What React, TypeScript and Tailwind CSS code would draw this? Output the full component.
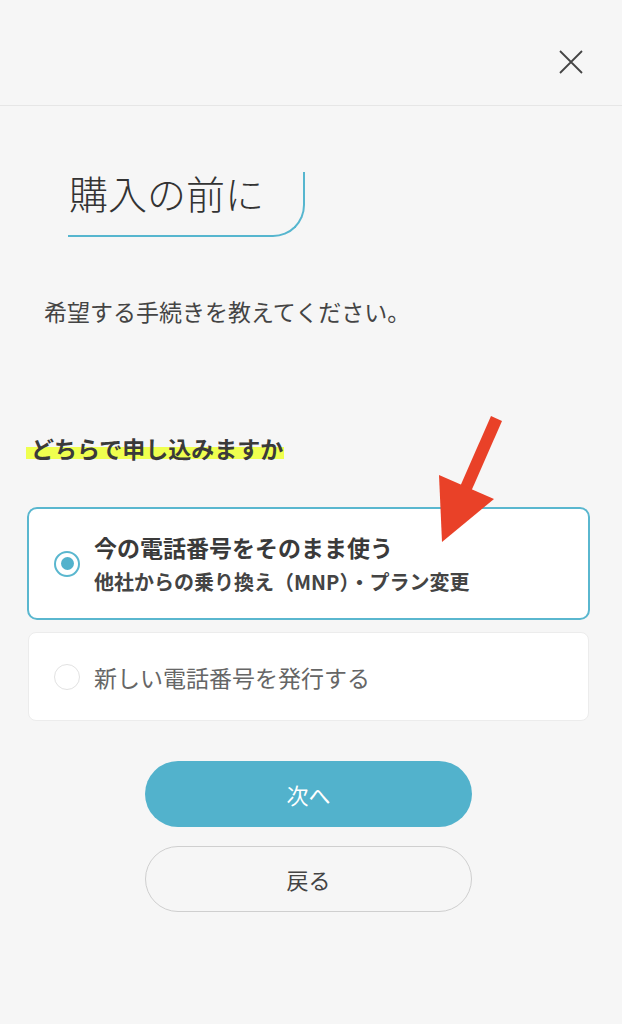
import React from "react"

const font = { fontFamily: '"Noto Sans CJK JP", "Noto Sans", sans-serif' }

const CloseIcon = () => (
  <svg width="24" height="24" viewBox="0 0 24 24" className="block">
    <path d="M1 1 L23 23 M23 1 L1 23" stroke="#444" strokeWidth="1.8" fill="none" />
  </svg>
)

const Arrow = () => (
  <svg
    className="absolute left-[430px] top-[405px] pointer-events-none"
    width="80"
    height="145"
    viewBox="430 405 80 145"
  >
    <line x1="496.5" y1="418.5" x2="466" y2="488" stroke="#e94128" strokeWidth="12" />
    <polygon points="439,475 494,499 442,542" fill="#e94128" />
  </svg>
)

const App: React.FC = () => (
  <div className="relative w-[622px] min-h-[1024px] bg-[#f6f6f6] text-[#333]" style={font}>
    <header className="h-[106px] border-b border-[#e6e6e6] flex justify-end items-start pt-[50px] pr-[39px]">
      <CloseIcon />
    </header>

    <div className="mt-[66px] ml-[68px] w-[237px] h-[65px] border-b-2 border-r-2 border-[#56b6cf] rounded-br-[32px]">
      <h1 className="pl-[1px] pt-[1px] text-[39px] leading-none font-light text-[#333]">購入の前に</h1>
    </div>

    <p className="mt-[63px] ml-[44px] text-[23px] leading-none text-[#444]">希望する手続きを教えてください。</p>

    <div className="mt-[112px] ml-[26px]">
      <span className="inline-block pl-[5px] pr-[1px] text-[23px] leading-[26px] font-bold text-[#3a3a3a] bg-[linear-gradient(transparent_46%,#efff4f_46%,#efff4f_92%,transparent_92%)]">
        どちらで申し込みますか
      </span>
    </div>

    <div className="mt-[44px] ml-[27px] w-[563px] h-[113px] border-2 border-[#5ab7cf] rounded-[10px] bg-white flex items-center">
      <span className="ml-[25px] w-[26px] h-[26px] rounded-full border-2 border-[#5ab7cf] flex items-center justify-center shrink-0">
        <span className="w-[13px] h-[13px] rounded-full bg-[#52b2cc]" />
      </span>
      <div className="ml-[14px] flex flex-col gap-[8px]">
        <span className="text-[23px] leading-[28px] font-bold text-[#3a3a3a]">今の電話番号をそのまま使う</span>
        <span className="text-[20px] leading-[26px] font-bold text-[#444]">他社からの乗り換え（MNP）・プラン変更</span>
      </div>
    </div>

    <div className="mt-[12px] ml-[28px] w-[561px] h-[89px] border border-[#ececec] rounded-[8px] bg-white flex items-center">
      <span className="ml-[25px] w-[26px] h-[26px] rounded-full border-[1.5px] border-[#e2e2e2] shrink-0" />
      <span className="ml-[14px] text-[23px] leading-[28px] text-[#666]">新しい電話番号を発行する</span>
    </div>

    <button className="mt-[40px] ml-[145px] w-[327px] h-[66px] rounded-full bg-[#52b2cc] text-white text-[22px] flex items-center justify-center">
      次へ
    </button>
    <button className="mt-[19px] ml-[145px] w-[327px] h-[66px] rounded-full border border-[#cfcfcf] text-[#444] text-[22px] flex items-center justify-center">
      戻る
    </button>

    <Arrow />
  </div>
)

export default App
